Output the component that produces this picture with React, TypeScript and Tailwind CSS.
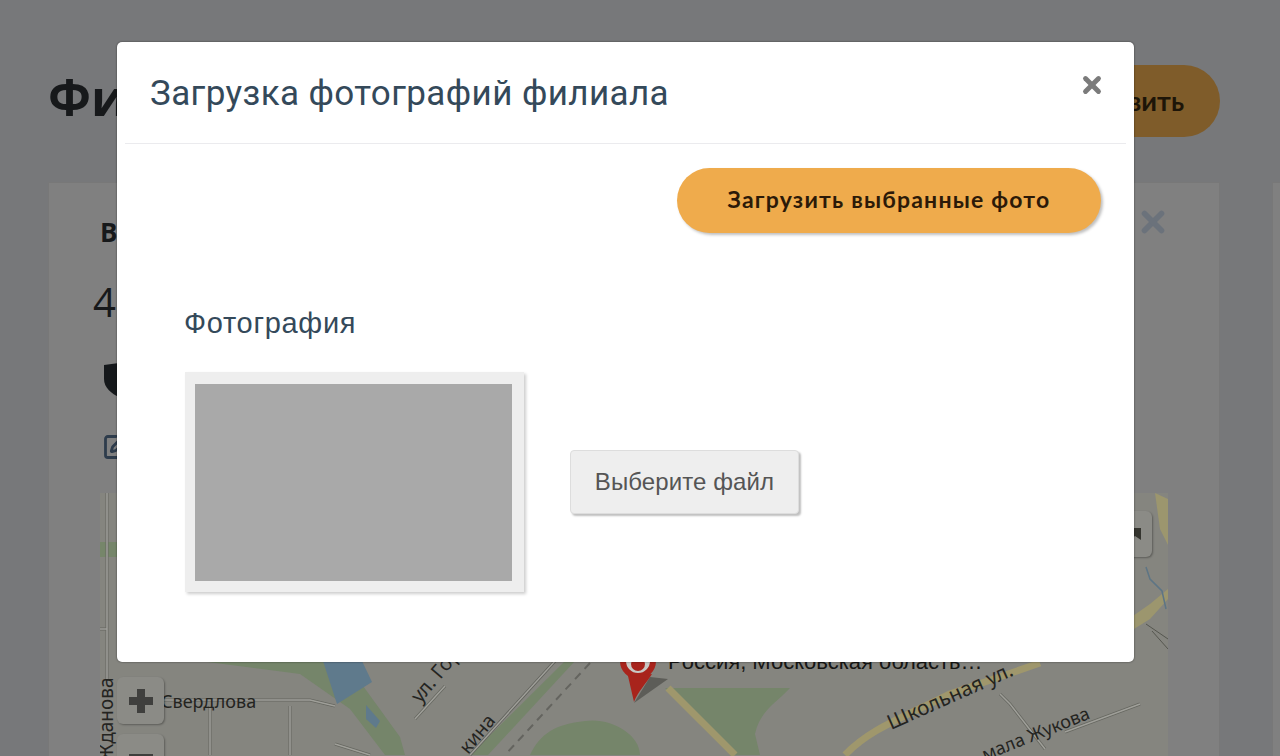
import { SquarePen, X } from "lucide-react";

function MapDrawing() {
  return (
    <svg className="block h-full w-full" viewBox="100 494 1068 300" fill="none">
      {/* areas */}
      <path d="M200 662H345L400 738 405 756H385L350 710 300 675Z" fill="#75856a" />
      <path d="M323 662H362L372 683 337 705Z" fill="#5f7a8c" />
      <path d="M366 706 380 722 376 729 366 720Z" fill="#5f7a8c" />
      <path d="M488 756 575 662H565L470 756Z" fill="#75856a" />
      <path d="M530 756C540 735 555 725 585 722 610 718 640 735 640 756Z" fill="#75856a" />
      <path d="M665 689H790C775 705 760 712 755 735L760 756H735Z" fill="#75856a" />
      <path d="M1100 640 1150 605 1168 590V600L1150 620 1110 645Z" fill="#9c966e" />
      <path d="M1155 494 1168 500 1170 550 1160 530Z" fill="#9c966e" />
      <path d="M100 543H117V558H100Z" fill="#76866a" />
      {/* streets */}
      <path d="M668 689 735 756" stroke="#9f976c" strokeWidth="7" />
      <path d="M845 756C870 730 900 720 950 695L1040 664" stroke="#9f976c" strokeWidth="7" />
      <path d="M555 662 470 756" stroke="#5f605a" strokeWidth="3" />
      <path d="M555 662 470 756" stroke="#9f9f99" strokeWidth="1.5" />
      <path d="M590 664 505 756" stroke="#64645f" strokeWidth="2" strokeDasharray="8 6" />
      <path d="M415 720 445 687M160 701H310L335 707M210 707V756M290 707V756M335 745 370 756" stroke="#666760" strokeWidth="3" />
      <path d="M415 720 445 687M160 701H310L335 707M210 707V756M290 707V756M335 745 370 756" stroke="#9f9f99" strokeWidth="1.5" />
      <path d="M1000 695 1010 705 1045 750M1065 733 1140 705" stroke="#666760" strokeWidth="3" />
      <path d="M1000 695 1010 705 1045 750M1065 733 1140 705" stroke="#9f9f99" strokeWidth="1.5" />
      <path d="M107 494V680M100 630H107" stroke="#666760" strokeWidth="3" />
      <path d="M107 494V680M100 630H107" stroke="#9f9f99" strokeWidth="1.5" />
      <path d="M1146 568 1150 580 1162 592 1166 610" stroke="#5d7585" strokeWidth="1.5" />
      <path d="M1146 625 1168 640M1152 632 1168 650" stroke="#55564f" strokeWidth="1" />
      <circle cx="892" cy="765" r="6" fill="#5f7a8c" />
      <circle cx="910" cy="762" r="5" fill="#5f7a8c" />
      {/* street names */}
      <g fill="#24241f" fontFamily="'Noto Sans', sans-serif" fontSize="18">
        <text x="161" y="709">Свердлова</text>
        <text transform="translate(113 762) rotate(-90)" fontSize="19">Жданова</text>
        <text transform="translate(420 705) rotate(-50)" fontSize="20">ул. Гор</text>
        <text transform="translate(468 756) rotate(-50)" fontSize="19">кина</text>
        <text transform="translate(891 731) rotate(-24)" fontSize="20.5">Школьная ул.</text>
        <text transform="translate(985 762) rotate(-22)">мала Жукова</text>
      </g>
      {/* balloon */}
      <path d="M634 704 668 680 650 678Z" fill="#5d5d58" />
      <circle cx="638" cy="662" r="15" fill="#c9c9c5" stroke="#a8241c" strokeWidth="6" />
      <circle cx="638" cy="665" r="7" fill="#a8241c" />
      <path d="M634 703 628 677 652 675C646 685 638 692 634 703Z" fill="#a8241c" />
    </svg>
  );
}

function MapButton({ bar }: { bar?: boolean }) {
  return (
    <div className="flex h-[47px] w-[47px] items-center justify-center rounded-md bg-[#8b8b86] shadow-[1px_1px_2px_rgba(0,0,0,0.3)]">
      <svg className="h-6 w-6" viewBox="0 0 24 24" fill="#3f3f3d">
        <path d={bar ? "M0 8h24v8H0z" : "M8 0h8v8h8v8h-8v8H8v-8H0V8h8z"} />
      </svg>
    </div>
  );
}

export default function App() {
  return (
    <div className="relative h-[756px] w-[1280px] overflow-hidden bg-[#77787a] font-['Liberation_Sans',sans-serif]">
      {/* page behind the dialog */}
      <div className="flex items-start justify-between pl-12 pr-[60px] pt-[65px]">
        <h1 className="font-['Open_Sans',sans-serif] text-[50px] font-bold leading-[64px] text-[#17191b]">Филиалы</h1>
        <div className="flex h-[72px] w-[240px] items-center justify-end rounded-full bg-[#7f5c2a] pr-[36px] font-['Lato',sans-serif] text-[27px] font-bold text-[#1d1508]">
          Добавить
        </div>
      </div>
      <div className="mt-[45px] flex gap-[52px] pl-12">
        <div className="relative h-[620px] w-[1172px] shrink-0 border border-[#787878] bg-[#808080] px-[51px] pt-[30px]">
          <X className="absolute right-[49px] top-[22px] h-[34px] w-[34px] text-[#6b727b]" strokeWidth={4} />
          <div className="font-['Open_Sans',sans-serif] text-[26px] font-bold text-[#17191b]">Выборгское</div>
          <div className="-ml-[7px] mt-[25px] font-['Open_Sans',sans-serif] text-[40px] leading-[50px] text-[#17191b]">4,8</div>
          <svg className="ml-1 mt-[36px] block h-[34px] w-[30px]" viewBox="0 0 30 34">
            <path d="M0 2 15 0 30 2V16C30 25 22 31 15 34 8 31 0 25 0 16Z" fill="#15181b" />
          </svg>
          <SquarePen className="ml-[2px] mt-[36px] h-7 w-7 text-[#2e3c4c]" strokeWidth={2.4} />
          <div className="relative mt-[32px] h-[300px] overflow-hidden bg-[#85857f]">
            <MapDrawing />
            <div className="absolute right-4 top-[18px] flex h-[46px] w-[46px] items-center justify-center rounded-md bg-[#8b8b86] shadow-[1px_1px_2px_rgba(0,0,0,0.3)]">
              <svg className="ml-3 h-3 w-3" viewBox="0 0 12 12" fill="#35352f">
                <path d="M0 0h12v12L6 8 0 12z" />
              </svg>
            </div>
            <div className="absolute left-[17px] top-[184px] flex flex-col gap-[10px]">
              <MapButton />
              <MapButton bar />
            </div>
            <div className="absolute left-[568px] top-[157px] text-[22px] leading-6 text-[#161614]">Россия, Московская область…</div>
          </div>
        </div>
        <div className="h-[620px] w-[100px] shrink-0 border border-[#787878] bg-[#808080]" />
      </div>

      {/* dialog */}
      <div className="absolute left-[117px] top-[42px] flex h-[620px] w-[1017px] flex-col rounded-[5px] bg-white shadow-[0_0_2px_rgba(0,0,0,0.6)]">
        <div className="relative mx-2 flex h-[102px] items-center border-b border-[#ebebee] pl-[25px] pt-[2px]">
          <h2 className="font-['Roboto',sans-serif] text-[35px] leading-none tracking-[0.4px] text-[#34495a]">Загрузка фотографий филиала</h2>
          <X className="absolute right-[21px] top-[30px] h-[26px] w-[26px] text-[#7b7b7b]" strokeWidth={4.5} />
        </div>
        <div className="flex flex-col pl-[67px] pr-[33px] pt-6">
          <button className="flex h-[65px] w-[424px] items-center justify-center self-end rounded-full bg-[#efab4c] pb-[3px] font-['Lato',sans-serif] text-[23px] font-bold tracking-[1.2px] text-[#2c1a08] shadow-[2px_2px_3px_rgba(0,0,0,0.25)]">
            Загрузить выбранные фото
          </button>
          <div className="mt-[74px] text-[29px] leading-8 tracking-[0.7px] text-[#34495a]">Фотография</div>
          <div className="mt-[33px] flex items-center gap-[46px] pl-px">
            <div className="h-[220px] w-[339px] bg-[#eeeeee] pl-[10px] pt-3 shadow-[2px_2px_3px_rgba(0,0,0,0.2)]">
              <div className="h-[197px] w-[317px] bg-[#a9a9a9]" />
            </div>
            <button className="flex h-[64px] w-[229px] items-center justify-center rounded-[4px] border border-[#dddddd] bg-[#eeeeee] text-[24px] tracking-[0.1px] text-[#555555] shadow-[2px_2px_2px_rgba(0,0,0,0.25)]">
              Выберите файл
            </button>
          </div>
        </div>
      </div>
    </div>
  );
}
